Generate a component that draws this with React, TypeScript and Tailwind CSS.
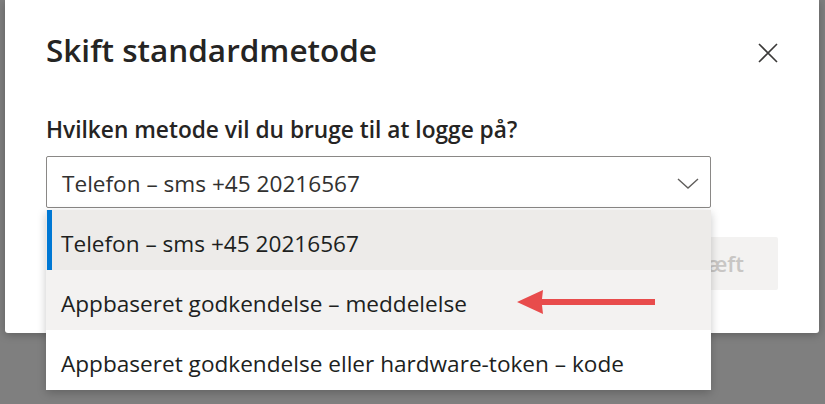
import { useState } from "react";

const options = [
  "Telefon – sms +45 20216567",
  "Appbaseret godkendelse – meddelelse",
  "Appbaseret godkendelse eller hardware-token – kode",
];

function CloseIcon() {
  return (
    <svg width="20" height="20" viewBox="0 0 20 20" fill="none">
      <path d="M1 1L19 19M19 1L1 19" stroke="#3b3a39" strokeWidth="1.6" />
    </svg>
  );
}

function Chevron() {
  return (
    <svg width="22" height="11" viewBox="0 0 22 11" fill="none">
      <path d="M1 1L11 10L21 1" stroke="#605e5c" strokeWidth="1.4" />
    </svg>
  );
}

export default function App() {
  const [selected] = useState(0);
  const [hovered] = useState(1);

  return (
    <div
      className="relative h-[404px] w-[825px] overflow-hidden bg-[#7f7f7f]"
      style={{ fontFamily: '"Open Sans", "Noto Sans", sans-serif' }}
    >
      {/* Dialog */}
      <div className="ml-[5px] flex h-[333px] w-[814px] flex-col rounded-b-[3px] bg-white pl-[41px] pr-[41px] pt-[30px] shadow-[0_2px_8px_rgba(0,0,0,0.25)]">
        <div className="flex items-start justify-between">
          <h2 className="text-[31.5px] font-semibold leading-[40px] text-[#252423]">
            Skift standardmetode
          </h2>
          <button className="mt-[13px] flex h-[20px] w-[20px] items-center justify-center">
            <CloseIcon />
          </button>
        </div>

        <label className="mt-[46px] text-[22.7px] font-semibold leading-[28px] text-[#252423]">
          Hvilken metode vil du bruge til at logge på?
        </label>

        {/* Select */}
        <div className="relative mt-[12px] w-[665px]">
          <div className="flex h-[52px] items-center justify-between rounded-[2px] border border-[#8a8886] pl-[15px] pr-[11px] pt-[3px]">
            <span className="text-[22.6px] leading-[30px] text-[#323130]">
              {options[selected]}
            </span>
            <Chevron />
          </div>

          {/* Dropdown list */}
          <div className="absolute left-0 top-[54px] z-10 w-full rounded-b-[3px] bg-white shadow-[0_3px_10px_rgba(0,0,0,0.22)]">
            {options.map((opt, i) => (
              <div
                key={opt}
                className={
                  "relative flex h-[60px] items-center pl-[15px] pt-[7px] text-[22.6px] leading-[30px] text-[#201f1e] " +
                  (i === selected
                    ? "bg-[#edebe9]"
                    : i === hovered
                      ? "bg-[#f3f2f1]"
                      : "bg-white")
                }
              >
                {i === selected && (
                  <span className="absolute bottom-0 left-[1px] top-0 w-[5px] bg-[#0078d4]" />
                )}
                {opt}
              </div>
            ))}
          </div>
        </div>

        {/* Footer button (partly hidden behind the list) */}
        <div className="mt-[29px] flex justify-end">
          <button className="flex h-[53px] w-[140px] items-center justify-end rounded-[2px] bg-[#f3f2f1] pr-[34px] text-[22px] font-semibold text-[#c8c6c4]">
            Bekræft
          </button>
        </div>
      </div>

      {/* Annotation arrow */}
      <svg
        className="absolute left-[515px] top-[288px] z-20"
        width="144"
        height="30"
        viewBox="0 0 144 30"
      >
        <path d="M2 14L28 2L27 11L140 11L140 17L27 17L28 26Z" fill="#e84c4c" />
      </svg>
    </div>
  );
}
